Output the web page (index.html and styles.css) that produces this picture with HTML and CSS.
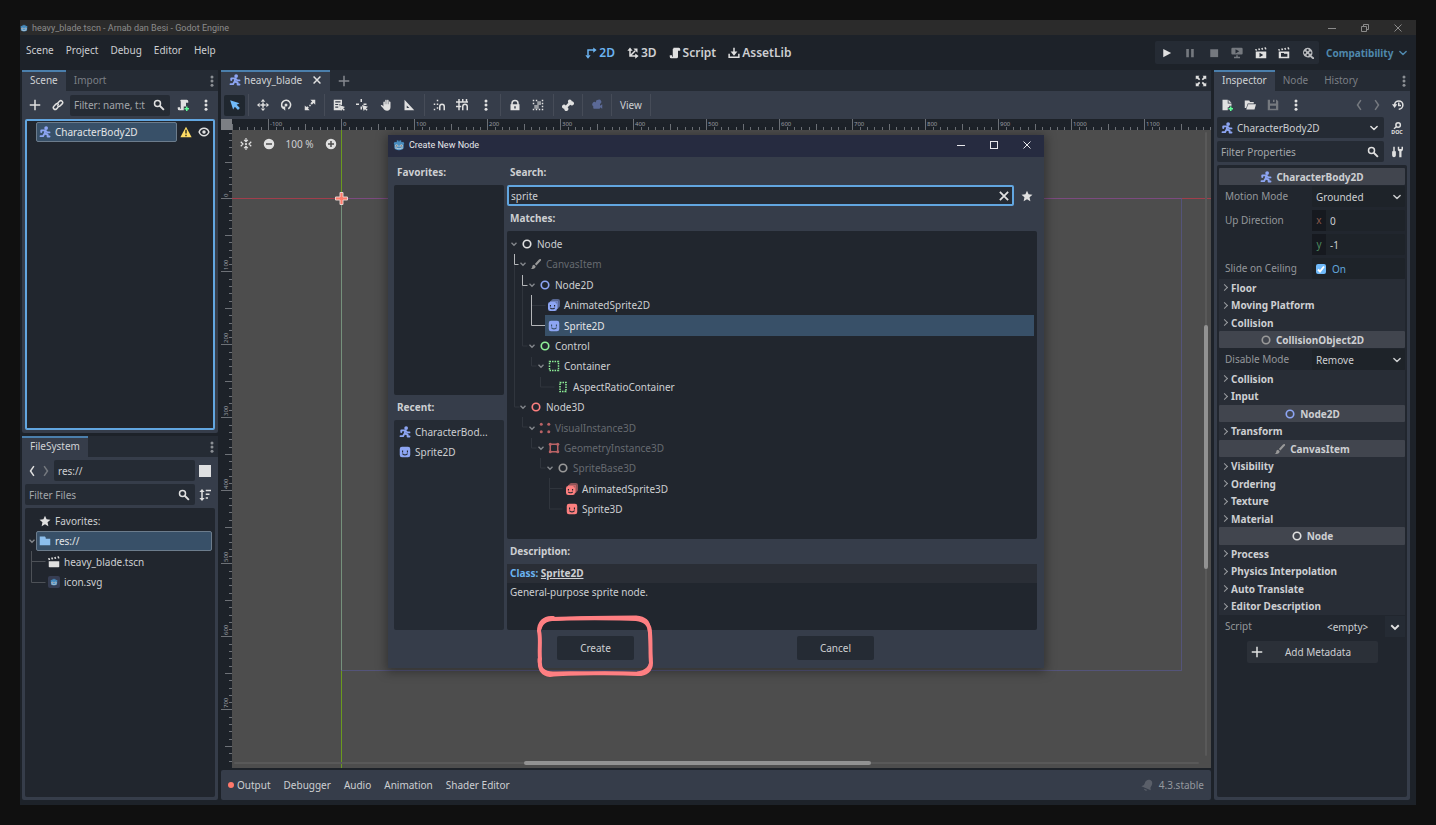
FILE: index.html
```
<!DOCTYPE html>
<html lang="en">
<head>
  <meta charset="UTF-8" />
  <title>heavy_blade.tscn - Arnab dan Besi - Godot Engine</title>
  <link rel="stylesheet" href="styles.css">
</head>
<body>
  <!-- icon sprites, 16x16 grid -->
  <svg class="sprites" aria-hidden="true">
    <symbol id="i-godot" viewBox="0 0 16 16">
      <path fill="#478cbf" d="M1 5.500 2.500 3.500l1.500.8L5 4V2l2-.5.8 2h.4l.8-2 2 .5v2l1 .3 1.500-.8L15 5.500l-.7 1.500V11c0 2.500-3 4-6.300 4s-6.300-1.500-6.300-4V7z"/>
      <circle cx="4.800" cy="9" r="1.700" fill="#e0e0e0"/><circle cx="11.200" cy="9" r="1.700" fill="#e0e0e0"/>
      <circle cx="5" cy="9.200" r=".9" fill="#414042"/><circle cx="11" cy="9.200" r=".9" fill="#414042"/>
      <path fill="none" stroke="#e0e0e0" d="M8 8.500v2M2.500 12h3v1h5v-1h3"/>
    </symbol>
    <symbol id="i-body" viewBox="0 0 16 16">
      <circle cx="9.500" cy="2.800" r="2.500" fill="currentColor"/>
      <path fill="none" stroke="currentColor" stroke-width="2.500" stroke-linejoin="round" stroke-linecap="round" d="M3 8V5.800h5.500L7.500 10l4 1.500V14H14M9 6.500l2 2h3M7 10.500l-1.500 3H2"/>
    </symbol>
    <symbol id="i-node" viewBox="0 0 16 16"><circle cx="8" cy="8" r="5" fill="none" stroke="currentColor" stroke-width="2.200"/></symbol>
    <symbol id="i-brush" viewBox="0 0 16 16">
      <path fill="currentColor" d="M14.500 1.500c-1-.8-2 .2-2.500.6L6.500 8l2 2L14 4c.6-.7 1.200-1.700.5-2.500zM5.500 9C3.500 9 3 10.500 3 12c0 1-1 2-2 2 2 1.200 6.500.8 6.500-3z"/>
    </symbol>
    <symbol id="i-sprite" viewBox="0 0 16 16">
      <path fill="currentColor" fill-rule="evenodd" d="M4 1h8a3 3 0 0 1 3 3v8a3 3 0 0 1-3 3H4a3 3 0 0 1-3-3V4a3 3 0 0 1 3-3zM4 6v2.500h1.500V6zm6.500 0v2.500H12V6zM4 10c.5 3.500 7.500 3.500 8 0h-1.500c-.8 1.500-4.200 1.500-5 0z"/>
    </symbol>
    <symbol id="i-anim" viewBox="0 0 16 16">
      <path fill="currentColor" opacity=".5" d="M7 0h6a3 3 0 0 1 3 3v6a3 3 0 0 1-2 2.800V5a3 3 0 0 0-3-3H4.200A3 3 0 0 1 7 0z"/>
      <path fill="currentColor" opacity=".75" d="M5 2h6a3 3 0 0 1 3 3v6a3 3 0 0 1-2 2.800V7a3 3 0 0 0-3-3H2.200A3 3 0 0 1 5 2z"/>
      <path fill="currentColor" fill-rule="evenodd" d="M3 4h6a3 3 0 0 1 3 3v6a3 3 0 0 1-3 3H3a3 3 0 0 1-3-3V7a3 3 0 0 1 3-3zM2.500 8v2H4V8zM8 8v2h1.500V8zm-5.500 3.500c.5 3 6.500 3 7 0H8c-.7 1-3.300 1-4 0z"/>
    </symbol>
    <symbol id="i-container" viewBox="0 0 16 16"><rect x="2" y="2" width="12" height="12" fill="none" stroke="currentColor" stroke-width="2" stroke-dasharray="2 1.400"/></symbol>
    <symbol id="i-aspect" viewBox="0 0 16 16"><rect x="4" y="2" width="8" height="12" fill="none" stroke="currentColor" stroke-width="2" stroke-dasharray="2 1.330"/></symbol>
    <symbol id="i-visual" viewBox="0 0 16 16">
      <g fill="currentColor"><circle cx="3" cy="3" r="2"/><circle cx="13" cy="3" r="2"/><circle cx="3" cy="13" r="2"/><circle cx="13" cy="13" r="2"/></g>
    </symbol>
    <symbol id="i-geometry" viewBox="0 0 16 16">
      <g fill="currentColor"><circle cx="3" cy="3" r="2"/><circle cx="13" cy="3" r="2"/><circle cx="3" cy="13" r="2"/><circle cx="13" cy="13" r="2"/></g>
      <rect x="3" y="3" width="10" height="10" fill="none" stroke="currentColor" stroke-width="2"/>
    </symbol>
    <symbol id="i-add" viewBox="0 0 16 16"><path fill="currentColor" d="M7 1v6H1v2h6v6h2V9h6V7H9V1z"/></symbol>
    <symbol id="i-link" viewBox="0 0 16 16">
      <g fill="none" stroke="currentColor" stroke-width="2" stroke-linecap="round"><path d="M8 5l2-2a2.500 2.500 0 0 1 3.500 0 2.500 2.500 0 0 1 0 3.500L11 9a2.500 2.500 0 0 1-3.500 0"/><path d="M8 11l-2 2.200a2.500 2.500 0 0 1-3.500 0 2.500 2.500 0 0 1 0-3.500L5 7a2.500 2.500 0 0 1 3.500 0"/></g>
    </symbol>
    <symbol id="i-search" viewBox="0 0 16 16"><g fill="none" stroke="currentColor" stroke-width="2"><circle cx="6" cy="6" r="4"/><path d="M9 9l5.500 5.500" stroke-width="2.500"/></g></symbol>
    <symbol id="i-script" viewBox="0 0 16 16"><path fill="currentColor" d="M6 1v1a1 1 0 0 0-1 1v10H4v-2H1v2a2 2 0 0 0 2 2h7a2 2 0 0 0 2-2V5h3V3a2 2 0 0 0-2-2z"/></symbol>
    <symbol id="i-script-add" viewBox="0 0 16 16">
      <path fill="currentColor" d="M6 1a1 1 0 0 0-1 2v10H4v-2H1v2a2 2 0 0 0 2 2h6v-5h3V5h3V3a2 2 0 0 0-2-2z"/>
      <path fill="#5fff97" d="M12 10h2v2h2v2h-2v2h-2v-2h-2v-2h2z"/>
    </symbol>
    <symbol id="i-dots" viewBox="0 0 16 16"><g fill="currentColor"><circle cx="8" cy="2.500" r="2"/><circle cx="8" cy="8" r="2"/><circle cx="8" cy="13.500" r="2"/></g></symbol>
    <symbol id="i-warn" viewBox="0 0 16 16"><path fill="#ffdd65" d="M8 1 .5 15h15z"/><path fill="#3a3520" d="M7 5h2v5H7zM7 11.500h2v2H7z"/></symbol>
    <symbol id="i-eye" viewBox="0 0 16 16"><path fill="none" stroke="currentColor" stroke-width="2" d="M1.500 8c2.500-6.500 10.500-6.500 13 0-2.500 6.500-10.500 6.500-13 0z"/><circle cx="8" cy="8" r="2.300" fill="currentColor"/></symbol>
    <symbol id="i-left" viewBox="0 0 16 16"><path fill="none" stroke="currentColor" stroke-width="2" d="M10.500 1.500 6 8l4.500 6.500"/></symbol>
    <symbol id="i-right" viewBox="0 0 16 16"><path fill="none" stroke="currentColor" stroke-width="2" d="M5.500 1.500 10 8l-4.500 6.500"/></symbol>
    <symbol id="i-down" viewBox="0 0 16 16"><path fill="none" stroke="currentColor" stroke-width="2.400" stroke-linecap="round" stroke-linejoin="round" d="M3 5.500l5 5 5-5"/></symbol>
    <symbol id="i-fold" viewBox="0 0 8 8"><path fill="none" stroke="currentColor" stroke-width="1.300" d="M1.500 2.800 4 5.300l2.500-2.500"/></symbol>
    <symbol id="i-close" viewBox="0 0 16 16"><path fill="none" stroke="currentColor" stroke-width="2.400" d="M2.500 2.500l11 11M13.500 2.500l-11 11"/></symbol>
    <symbol id="i-sort" viewBox="0 0 16 16"><path fill="currentColor" d="M4 0 .5 4H3v8H.5L4 16l3.500-4H5V4h2.500zM9 1h7v2H9zM9 6h5v2H9zM9 11h3v2H9z"/></symbol>
    <symbol id="i-star" viewBox="0 0 16 16"><path fill="currentColor" d="M8 1l2.100 4.800 5.200.5-3.900 3.500 1.100 5.200L8 12.300 3.500 15l1.100-5.200L.7 6.300l5.200-.5z"/></symbol>
    <symbol id="i-folder" viewBox="0 0 16 16"><path fill="currentColor" d="M1 2v11.500h14V5H9V3.500L8 2z"/></symbol>
    <symbol id="i-clapper" viewBox="0 0 16 16"><path fill="currentColor" d="M1 7h14v7a1 1 0 0 1-1 1H2a1 1 0 0 1-1-1zM0 3l2-.5 1 2.500L1 5.500zM4 2.200l2-.4 1 2.500-2 .4zM8.200 1.500l2-.4L11 3.600l-2 .3zM12.400.8l2-.4 1 2.600-2 .4z"/></symbol>
    <symbol id="i-clapper-play" viewBox="0 0 16 16"><path fill="currentColor" fill-rule="evenodd" d="M1 6h14v9H1zM6 7.500v6l5-3zM0 3l2-.5L3 4.500 1 5zM4 2.200l2-.4L7 4l-2 .3zM8.200 1.500l2-.4L11 3.500l-2 .3zM12.400.8l2-.4 1 2.600-2 .2z"/></symbol>
    <symbol id="i-clapper-open" viewBox="0 0 16 16"><path fill="currentColor" fill-rule="evenodd" d="M1 6h14v9H1zM4 8v5h8.500V9H8V8zM0 3l2-.5L3 4.500 1 5zM4 2.200l2-.4L7 4l-2 .3zM8.200 1.500l2-.4L11 3.500l-2 .3zM12.400.8l2-.4 1 2.600-2 .2z"/></symbol>
    <symbol id="i-play" viewBox="0 0 16 16"><path fill="currentColor" d="M3 2.500v11l10.500-5.500z"/></symbol>
    <symbol id="i-pause" viewBox="0 0 16 16"><path fill="currentColor" d="M3 2.500h3.500v11H3zM9.500 2.500H13v11H9.500z"/></symbol>
    <symbol id="i-stop" viewBox="0 0 16 16"><path fill="currentColor" d="M3 3h10.500v10.500H3z"/></symbol>
    <symbol id="i-remote" viewBox="0 0 16 16"><path fill="currentColor" fill-rule="evenodd" d="M2 1h12a1.500 1.500 0 0 1 1.500 1.500v6A1.500 1.500 0 0 1 14 10H2A1.500 1.500 0 0 1 .5 8.500v-6A1.500 1.500 0 0 1 2 1zm4 2v5.500l5-2.700zM7 11h2v2h3v2H4v-2h3z"/></symbol>
    <symbol id="i-reel" viewBox="0 0 16 16"><path fill="currentColor" fill-rule="evenodd" d="M7.500 1a6.500 6.500 0 0 1 6.500 6.500c0 1.500-.5 3-1.300 4L16 14v2h-2l-3-2.800A6.500 6.500 0 1 1 7.500 1zm0 1.700a1.500 1.500 0 1 0 0 3 1.500 1.500 0 0 0 0-3zM4 6a1.500 1.500 0 1 0 0 3 1.500 1.500 0 0 0 0-3zm7 0a1.500 1.500 0 1 0 0 3 1.500 1.500 0 0 0 0-3zm-3.500 3.300a1.500 1.500 0 1 0 0 3 1.500 1.500 0 0 0 0-3z"/></symbol>
    <symbol id="i-2d" viewBox="0 0 16 16"><path fill="none" stroke="currentColor" stroke-width="2" d="M4 11V4h8"/><path fill="currentColor" d="M11 .5 15.500 4 11 7.500zM.5 11 4 15.500 7.500 11z"/></symbol>
    <symbol id="i-3d" viewBox="0 0 16 16"><path fill="none" stroke="currentColor" stroke-width="2" d="M4 4v8h8M4 12l7-7"/><path fill="currentColor" d="M.5 5 4 .5 7.500 5zM11 8.500 15.500 12 11 15.500zM8.500 2H14v5.500z"/></symbol>
    <symbol id="i-asset" viewBox="0 0 16 16"><path fill="none" stroke="currentColor" stroke-width="2" d="M8 1v7M1.500 9v4.500h13V9"/><path fill="currentColor" d="M3.500 6 8 11.500 12.500 6z"/></symbol>
    <symbol id="i-select" viewBox="0 0 16 16"><path fill="currentColor" d="M1.500 1.500 5.500 14l2.300-3.800 4.200 4.300 2.500-2.500-4.300-4.200L14 5.500z"/></symbol>
    <symbol id="i-move" viewBox="0 0 16 16"><path fill="currentColor" fill-rule="evenodd" d="M8 0 5 3.500h6zM8 16l3-3.500H5zM0 8l3.500 3V5zM16 8l-3.500-3v6zM7 4.500h2V7h2.500v2H9v2.500H7V9H4.500V7H7z"/></symbol>
    <symbol id="i-rotate" viewBox="0 0 16 16"><path fill="none" stroke="currentColor" stroke-width="2" d="M4.500 12.500A6 6 0 1 1 11 13"/><path fill="currentColor" d="M1 10h6v5.500zM8 6a2 2 0 1 0 0 4 2 2 0 0 0 0-4z"/></symbol>
    <symbol id="i-scale" viewBox="0 0 16 16"><path fill="currentColor" d="M8.500 1H15v6.500l-2.200-2.200L10.500 7.500l-2-2 2.300-2.300zM1 8.500l2.200 2.200 1.300-1.200 2 2-1.200 1.300L7.500 15H1zM7 7.500h2v2H7z"/></symbol>
    <symbol id="i-list" viewBox="0 0 16 16"><path fill="currentColor" fill-rule="evenodd" d="M1 1h11v7L8 7l3 8H1zM3 3v1.500h7V3zm0 3.500V8h4V6.500zM3 10v1.500h4V10z"/><path fill="currentColor" d="M8.500 8l2.300 8 1.500-2.500 2.200 2.200 1.300-1.300-2.200-2.100L16 10.500z"/></symbol>
    <symbol id="i-pivot" viewBox="0 0 16 16"><path fill="currentColor" d="M6 0h2v4H6zM0 6h4v2H0zM10 6h4v2h-4zM6 10h2v4H6zM8 8l2.300 8 1.700-2.500 2.200 2.200 1.300-1.300-2.200-2.200L16 10.300z"/></symbol>
    <symbol id="i-pan" viewBox="0 0 16 16"><path fill="currentColor" d="M7 1.500c1.300-1 2 0 2 1V7h.5V1.500c1-1 2 0 2 .8V7h.5V3.500c1-.8 2 0 2 .8V11c0 3-2 4.500-4.500 4.500-3 0-4-1-5.500-3.500L1 9c.5-1.500 2-1.200 3.500 1V4c.5-1.200 2-1 2 0v3H7z"/></symbol>
    <symbol id="i-ruler" viewBox="0 0 16 16"><path fill="currentColor" fill-rule="evenodd" d="M2 1l13 14H2zm3 7.500V12h3.500z"/></symbol>
    <symbol id="i-snap" viewBox="0 0 16 16"><path fill="currentColor" d="M5 1h2v2H5zM1 6h2v2H1zM5 6h2v2H5zM1 13h2v2H1zM5 11h2v2H5z"/><path fill="none" stroke="currentColor" stroke-width="2" d="M9 15v-5a3 3 0 0 1 6 0v5"/></symbol>
    <symbol id="i-grid" viewBox="0 0 16 16"><path fill="currentColor" d="M3 0h2v3h3V0h2v3h3V0h2v3h1v2H5v4h2v2H5v4H3v-4H0V9h3V5H0V3h3z"/><path fill="none" stroke="currentColor" stroke-width="2" d="M9 15v-5a3 3 0 0 1 6 0v5"/></symbol>
    <symbol id="i-lock" viewBox="0 0 16 16"><path fill="currentColor" fill-rule="evenodd" d="M8 1a5 5 0 0 1 5 5v1h1v8H2V7h1V6a5 5 0 0 1 5-5zm0 2a3 3 0 0 0-3 3v1h6V6a3 3 0 0 0-3-3zM7 9.500v3h2v-3z"/></symbol>
    <symbol id="i-group" viewBox="0 0 16 16"><path fill="currentColor" d="M1 1h2v2H1zM5 1h2v2H5zM13 1h2v2h-2zM1 5h2v2H1zM13 5h2v2h-2zM1 13h2v2H1zM5 13h2v2H5zM9 13h2v2H9zM13 13h2v2h-2zM13 9h2v2h-2z"/><path fill="currentColor" opacity=".6" d="M7 3h5v5H7zM3 8h6v5H3z"/></symbol>
    <symbol id="i-bone" viewBox="0 0 16 16"><path fill="currentColor" d="M10.500.5a2.800 2.800 0 0 0-2 4.500L5 8.500A2.800 2.800 0 1 0 3 13a2.800 2.800 0 1 0 4.500-2L11 7.500A2.800 2.800 0 1 0 13 3a2.800 2.800 0 0 0-2.500-2.500z"/></symbol>
    <symbol id="i-camera" viewBox="0 0 16 16"><path fill="currentColor" d="M9.500 1a3 3 0 0 0-2.900 3.500A3 3 0 1 0 3 9.500V12a1 1 0 0 0 1 1h7a1 1 0 0 0 1-1v-1l3 2V7l-3 2V6.500A3 3 0 0 0 9.500 1z"/></symbol>
    <symbol id="i-expand" viewBox="0 0 16 16"><path fill="currentColor" d="M1 1h5L4.500 2.500l2.500 3L5.500 7l-3-2.500L1 6zM15 1h-5l1.500 1.500-2.500 3L10.500 7l3-2.500L15 6zM1 15h5l-1.500-1.500 2.500-3L5.500 9l-3 2.500L1 10zM15 15h-5l1.500-1.500-2.500-3L10.500 9l3 2.500L15 10z"/></symbol>
    <symbol id="i-new" viewBox="0 0 16 16"><path fill="currentColor" d="M2 1v14h7v-4h2V9h3V6H9V1zM10 1v4h4z"/><path fill="#5fff97" d="M12 10h2v2h2v2h-2v2h-2v-2h-2v-2h2z"/></symbol>
    <symbol id="i-load" viewBox="0 0 16 16"><path fill="currentColor" d="M1 2h6l1 2h5v2H5l-2 6H1zM5.500 7H16l-2 7H3z"/></symbol>
    <symbol id="i-save" viewBox="0 0 16 16"><path fill="currentColor" fill-rule="evenodd" d="M1 1h3v5h8V1h1l2 2v12H1zm7 0h2v3H8zM4 9v4h8V9z"/></symbol>
    <symbol id="i-history" viewBox="0 0 16 16"><path fill="none" stroke="currentColor" stroke-width="2" d="M3.500 8a5.500 5.500 0 1 1 5.500 5.500M9 4.500V8.500H12"/><path fill="currentColor" d="M0 7h7l-3.500 5z"/></symbol>
    <symbol id="i-doc" viewBox="0 0 16 16"><g fill="none" stroke="currentColor" stroke-width="2"><circle cx="9.500" cy="4" r="3"/><path d="M7.500 6 4 9"/></g><text x="8" y="16" text-anchor="middle" fill="currentColor" font-family="Noto Sans" font-weight="700" font-size="7">DOC</text></symbol>
    <symbol id="i-tools" viewBox="0 0 16 16"><path fill="currentColor" d="M3 1h2v6h1.500v5c0 4-5 4-5 0V7H3zM9 1v3c0 1.500.8 2.500 2 3v8h3V7c1.200-.5 2-1.500 2-3V1h-2v3h-3V1z"/></symbol>
    <symbol id="i-bell" viewBox="0 0 16 16"><path fill="currentColor" d="M13 1.500c-4-1.500-7 .5-8 4L4 8 .5 9.500 13 15l-.5-3.500L14 9c1.500-3 1.500-6-1-7.500zM4 13a2.500 2.500 0 0 0 4.500 1.500z"/></symbol>
    <symbol id="i-center" viewBox="0 0 16 16"><circle cx="8" cy="8" r="1.500" fill="currentColor"/><path fill="none" stroke="currentColor" stroke-width="1.600" d="M8 0v5M8 16v-5M5.500 2.500 8 5l2.500-2.500M5.500 13.500 8 11l2.500 2.500M1 5l3 3-3 3M15 5l-3 3 3 3"/></symbol>
    <symbol id="i-minus" viewBox="0 0 16 16"><path fill="currentColor" fill-rule="evenodd" d="M8 1a7 7 0 1 1 0 14A7 7 0 0 1 8 1zM4 7v2h8V7z"/></symbol>
    <symbol id="i-plus" viewBox="0 0 16 16"><path fill="currentColor" fill-rule="evenodd" d="M8 1a7 7 0 1 1 0 14A7 7 0 0 1 8 1zM7 4v3H4v2h3v3h2V9h3V7H9V4z"/></symbol>
    <symbol id="w-min" viewBox="0 0 8 8"><path fill="none" stroke="currentColor" d="M0 4.500h8"/></symbol>
    <symbol id="w-max" viewBox="0 0 8 8"><rect x=".5" y=".5" width="7" height="7" fill="none" stroke="currentColor"/></symbol>
    <symbol id="w-restore" viewBox="0 0 8 8"><path fill="none" stroke="currentColor" d="M.5 2.500h5v5h-5zM2.500 2V.5h5v5H6"/></symbol>
    <symbol id="w-close" viewBox="0 0 8 8"><path fill="none" stroke="currentColor" d="M.5.500l7 7M7.500.500l-7 7"/></symbol>
  </svg>

  <div class="app">
    <header class="titlebar">
      <svg class="icon logo"><use href="#i-godot"/></svg>
      <span>heavy_blade.tscn - Arnab dan Besi - Godot Engine</span>
      <div class="window-buttons">
        <button aria-label="Minimize"><svg><use href="#w-min"/></svg></button>
        <button aria-label="Restore"><svg><use href="#w-restore"/></svg></button>
        <button aria-label="Close"><svg><use href="#w-close"/></svg></button>
      </div>
    </header>

    <div class="menubar">
      <nav class="menus">
        <button>Scene</button>
        <button>Project</button>
        <button>Debug</button>
        <button>Editor</button>
        <button>Help</button>
      </nav>
      <div class="workspaces">
        <button class="active"><svg class="icon"><use href="#i-2d"/></svg>2D</button>
        <button><svg class="icon"><use href="#i-3d"/></svg>3D</button>
        <button><svg class="icon"><use href="#i-script"/></svg>Script</button>
        <button><svg class="icon"><use href="#i-asset"/></svg>AssetLib</button>
      </div>
      <div class="run">
        <div class="run-buttons">
          <button aria-label="Run project"><svg class="icon"><use href="#i-play"/></svg></button>
          <button aria-label="Pause" class="dim"><svg class="icon"><use href="#i-pause"/></svg></button>
          <button aria-label="Stop" class="dim"><svg class="icon"><use href="#i-stop"/></svg></button>
          <button aria-label="Remote debug" class="dim"><svg class="icon"><use href="#i-remote"/></svg></button>
          <button aria-label="Run current scene"><svg class="icon"><use href="#i-clapper-play"/></svg></button>
          <button aria-label="Run specific scene"><svg class="icon"><use href="#i-clapper-open"/></svg></button>
          <button aria-label="Movie maker" class="reel"><svg class="icon"><use href="#i-reel"/></svg></button>
        </div>
        <div class="renderer">
          <select aria-label="Renderer"><option>Compatibility</option></select>
          <svg class="icon small"><use href="#i-down"/></svg>
        </div>
      </div>
    </div>

    <main class="workarea">
      <!-- left docks -->
      <div class="dock-column">
        <section class="dock scene-dock">
          <div class="tabs">
            <button class="tab active">Scene</button>
            <button class="tab">Import</button>
            <button class="tab-menu" aria-label="Dock options"><svg class="icon"><use href="#i-dots"/></svg></button>
          </div>
          <div class="toolbar">
            <button aria-label="Add node"><svg class="icon"><use href="#i-add"/></svg></button>
            <button aria-label="Instance scene"><svg class="icon"><use href="#i-link"/></svg></button>
            <label class="field">
              <input type="text" placeholder="Filter: name, t:t" aria-label="Filter nodes">
              <svg class="icon"><use href="#i-search"/></svg>
            </label>
            <button aria-label="Attach script"><svg class="icon"><use href="#i-script-add"/></svg></button>
            <button aria-label="More"><svg class="icon"><use href="#i-dots"/></svg></button>
          </div>
          <div class="tree focused">
            <div class="row">
              <span class="fold"></span>
              <span class="item selected outlined"><svg class="icon blue"><use href="#i-body"/></svg>CharacterBody2D</span>
              <button aria-label="Warnings" class="row-button"><svg class="icon"><use href="#i-warn"/></svg></button>
              <button aria-label="Toggle visibility" class="row-button"><svg class="icon"><use href="#i-eye"/></svg></button>
            </div>
          </div>
        </section>

        <section class="dock files-dock">
          <div class="tabs">
            <button class="tab active">FileSystem</button>
            <button class="tab-menu" aria-label="Dock options"><svg class="icon"><use href="#i-dots"/></svg></button>
          </div>
          <div class="file-bars">
            <div class="file-bar">
              <button aria-label="Back" class="nav"><svg class="icon"><use href="#i-left"/></svg></button>
              <button aria-label="Forward" class="nav dim"><svg class="icon"><use href="#i-right"/></svg></button>
              <label class="field path"><input type="text" value="res://" aria-label="Path"></label>
              <button aria-label="Split mode" class="side"><span class="split"></span></button>
            </div>
            <div class="file-bar">
              <label class="field">
                <input type="text" placeholder="Filter Files" aria-label="Filter Files">
                <svg class="icon"><use href="#i-search"/></svg>
              </label>
              <button aria-label="Sort" class="side"><svg class="icon"><use href="#i-sort"/></svg></button>
            </div>
          </div>
          <div class="tree">
            <svg class="guides" aria-hidden="true"><path class="mid" d="M6.500 43v31.500h14M6.500 53.500h14"/></svg>
            <div class="row">
              <span class="fold"></span>
              <span class="item"><svg class="icon"><use href="#i-star"/></svg>Favorites:</span>
            </div>
            <div class="row">
              <svg class="fold"><use href="#i-fold"/></svg>
              <span class="item selected outlined"><svg class="icon folder"><use href="#i-folder"/></svg>res://</span>
            </div>
            <div class="row lv1">
              <span class="fold"></span>
              <span class="item"><svg class="icon"><use href="#i-clapper"/></svg>heavy_blade.tscn</span>
            </div>
            <div class="row lv1">
              <span class="fold"></span>
              <span class="item"><svg class="icon thumb"><use href="#i-godot"/></svg>icon.svg</span>
            </div>
          </div>
        </section>
      </div>

      <!-- 2D editor -->
      <div class="center">
        <div class="tabs">
          <button class="tab active scene-tab"><svg class="icon blue"><use href="#i-body"/></svg>heavy_blade<svg class="icon x"><use href="#i-close"/></svg></button>
          <button class="new-tab" aria-label="New scene"><svg class="icon"><use href="#i-add"/></svg></button>
          <button class="tab-menu wide" aria-label="Distraction free"><svg class="icon"><use href="#i-expand"/></svg></button>
        </div>
        <div class="canvas-tools">
          <button class="pressed" aria-label="Select"><svg class="icon"><use href="#i-select"/></svg></button>
          <div class="tool-group">
            <button aria-label="Move"><svg class="icon"><use href="#i-move"/></svg></button>
            <button aria-label="Rotate"><svg class="icon"><use href="#i-rotate"/></svg></button>
            <button aria-label="Scale"><svg class="icon"><use href="#i-scale"/></svg></button>
          </div>
          <div class="tool-group">
            <button aria-label="List select"><svg class="icon"><use href="#i-list"/></svg></button>
            <button aria-label="Pivot"><svg class="icon"><use href="#i-pivot"/></svg></button>
            <button aria-label="Pan"><svg class="icon"><use href="#i-pan"/></svg></button>
            <button aria-label="Ruler"><svg class="icon"><use href="#i-ruler"/></svg></button>
          </div>
          <div class="tool-group">
            <button aria-label="Smart snap"><svg class="icon"><use href="#i-snap"/></svg></button>
            <button aria-label="Grid snap"><svg class="icon"><use href="#i-grid"/></svg></button>
            <button aria-label="Snap options"><svg class="icon"><use href="#i-dots"/></svg></button>
          </div>
          <div class="tool-group">
            <button aria-label="Lock"><svg class="icon"><use href="#i-lock"/></svg></button>
            <button aria-label="Group"><svg class="icon"><use href="#i-group"/></svg></button>
          </div>
          <div class="tool-group">
            <button aria-label="Skeleton"><svg class="icon"><use href="#i-bone"/></svg></button>
          </div>
          <div class="tool-group">
            <button aria-label="Override camera" class="camera"><svg class="icon"><use href="#i-camera"/></svg></button>
          </div>
          <div class="tool-group view"><button>View</button></div>
        </div>

        <div class="viewport">
          <span class="ruler-corner"></span>
          <svg class="ruler-h">
            <defs>
              <pattern id="ticks-h" x="36" width="73" height="11" patternUnits="userSpaceOnUse">
                <path stroke="#6d7177" d="M.5 0v11M37.500 5v6M8.500 8v3M15.500 8v3M22.500 8v3M30.500 8v3M44.500 8v3M52.500 8v3M59.500 8v3M66.500 8v3"/>
              </pattern>
            </defs>
            <rect width="100%" height="11" fill="url(#ticks-h)"/>
            <g id="labels-h"></g>
          </svg>
          <svg class="ruler-v">
            <defs>
              <pattern id="ticks-v" y="68" width="11" height="73" patternUnits="userSpaceOnUse">
                <path stroke="#6d7177" d="M0 .5h11M4 37.500h7M8 8.500h3M8 15.500h3M8 22.500h3M8 30.500h3M8 44.500h3M8 52.500h3M8 59.500h3M8 66.500h3"/>
              </pattern>
            </defs>
            <rect width="11" height="100%" fill="url(#ticks-v)"/>
            <g id="labels-v"></g>
          </svg>
          <div class="canvas">
            <div class="axis axis-x"></div>
            <div class="axis axis-y"></div>
            <div class="screen-rect"></div>
            <svg class="origin" viewBox="0 0 13 13"><path fill="#ff7b6b" stroke="#e9cfcb" d="M5 .5h3V5h4.500v3H8v4.500H5V8H.5V5H5z"/></svg>
            <div class="zoom">
              <button aria-label="Center view"><svg class="icon"><use href="#i-center"/></svg></button>
              <button aria-label="Zoom out"><svg class="icon"><use href="#i-minus"/></svg></button>
              <button class="percent">100 %</button>
              <button aria-label="Zoom in"><svg class="icon"><use href="#i-plus"/></svg></button>
            </div>
            <div class="scroll scroll-v"><span></span></div>
            <div class="scroll scroll-h"><span></span></div>
          </div>
        </div>

        <footer class="bottom-panel">
          <button class="output">Output</button>
          <button>Debugger</button>
          <button>Audio</button>
          <button>Animation</button>
          <button>Shader Editor</button>
          <div class="version"><svg class="icon"><use href="#i-bell"/></svg><a href="#">4.3.stable</a></div>
        </footer>
      </div>

      <!-- inspector -->
      <section class="dock inspector">
        <div class="tabs">
          <button class="tab active">Inspector</button>
          <button class="tab">Node</button>
          <button class="tab">History</button>
          <button class="tab-menu" aria-label="Dock options"><svg class="icon"><use href="#i-dots"/></svg></button>
        </div>
        <div class="toolbar">
          <button aria-label="New resource"><svg class="icon"><use href="#i-new"/></svg></button>
          <button aria-label="Load resource"><svg class="icon"><use href="#i-load"/></svg></button>
          <button aria-label="Save resource" class="dim"><svg class="icon"><use href="#i-save"/></svg></button>
          <button aria-label="Extra options"><svg class="icon"><use href="#i-dots"/></svg></button>
          <span class="spacer"></span>
          <button aria-label="Previous" class="nav dim"><svg class="icon"><use href="#i-left"/></svg></button>
          <button aria-label="Next" class="nav dim"><svg class="icon"><use href="#i-right"/></svg></button>
          <button aria-label="History"><svg class="icon"><use href="#i-history"/></svg></button>
        </div>
        <div class="inspector-bars">
          <div class="file-bar">
            <label class="field object">
              <svg class="icon blue"><use href="#i-body"/></svg>
              <select aria-label="Edited object"><option>CharacterBody2D</option></select>
              <svg class="icon small"><use href="#i-down"/></svg>
            </label>
            <button aria-label="Open documentation" class="side"><svg class="icon"><use href="#i-doc"/></svg></button>
          </div>
          <div class="file-bar">
            <label class="field">
              <input type="text" placeholder="Filter Properties" aria-label="Filter Properties">
              <svg class="icon"><use href="#i-search"/></svg>
            </label>
            <button aria-label="Manage properties" class="side"><svg class="icon"><use href="#i-tools"/></svg></button>
          </div>
        </div>

        <div class="properties">
          <h3 class="class-header"><svg class="icon blue"><use href="#i-body"/></svg>CharacterBody2D</h3>
          <div class="props">
            <div class="prop">
              <label for="motion">Motion Mode</label>
              <div class="value"><select id="motion"><option>Grounded</option></select><svg class="icon small"><use href="#i-down"/></svg></div>
            </div>
            <div class="prop">
              <label for="upx">Up Direction</label>
              <div class="value"><span class="component cx">x</span><input id="upx" type="text" value="0"></div>
              <div class="value second"><span class="component cy">y</span><input type="text" value="-1" aria-label="Up Direction y"></div>
            </div>
            <div class="prop">
              <label for="slide">Slide on Ceiling</label>
              <div class="value on">
                <input type="checkbox" id="slide" checked>
                <svg class="tick" viewBox="0 0 10 10" aria-hidden="true"><path d="M2 5.500l2 2 4-5"/></svg>
                <label for="slide">On</label>
              </div>
            </div>
          </div>
          <div class="groups">
            <button>Floor</button>
            <button>Moving Platform</button>
            <button>Collision</button>
          </div>
          <h3 class="class-header"><svg class="icon grey"><use href="#i-node"/></svg>CollisionObject2D</h3>
          <div class="props">
            <div class="prop">
              <label for="disable">Disable Mode</label>
              <div class="value"><select id="disable"><option>Remove</option></select><svg class="icon small"><use href="#i-down"/></svg></div>
            </div>
          </div>
          <div class="groups">
            <button>Collision</button>
            <button>Input</button>
            <h3 class="class-header"><svg class="icon blue"><use href="#i-node"/></svg>Node2D</h3>
            <button>Transform</button>
            <h3 class="class-header"><svg class="icon grey"><use href="#i-brush"/></svg>CanvasItem</h3>
            <button>Visibility</button>
            <button>Ordering</button>
            <button>Texture</button>
            <button>Material</button>
            <h3 class="class-header"><svg class="icon"><use href="#i-node"/></svg>Node</h3>
            <button>Process</button>
            <button>Physics Interpolation</button>
            <button>Auto Translate</button>
            <button>Editor Description</button>
          </div>
          <div class="props">
            <div class="prop">
              <label for="script">Script</label>
              <div class="value script"><select id="script"><option>&lt;empty&gt;</option></select><span class="drop"><svg class="icon"><use href="#i-fold"/></svg></span></div>
            </div>
          </div>
          <button class="metadata"><svg class="icon"><use href="#i-add"/></svg><span>Add Metadata</span></button>
        </div>
      </section>
    </main>

    <div class="dialog" role="dialog" aria-labelledby="dialogTitle">
      <div class="dialog-title">
        <svg class="icon"><use href="#i-godot"/></svg>
        <span id="dialogTitle">Create New Node</span>
        <div class="window-buttons">
          <button aria-label="Minimize"><svg><use href="#w-min"/></svg></button>
          <button aria-label="Maximize"><svg><use href="#w-max"/></svg></button>
          <button aria-label="Close"><svg><use href="#w-close"/></svg></button>
        </div>
      </div>
      <div class="dialog-body">
        <div class="dialog-side">
          <h4>Favorites:</h4>
          <div class="favorites"></div>
          <h4>Recent:</h4>
          <div class="recent">
            <div class="row"><svg class="icon blue"><use href="#i-body"/></svg>CharacterBod...</div>
            <div class="row"><svg class="icon blue"><use href="#i-sprite"/></svg>Sprite2D</div>
          </div>
        </div>
        <div class="dialog-main">
          <h4><label for="search">Search:</label></h4>
          <div class="search-row">
            <label class="field focused">
              <input type="text" id="search" value="sprite">
              <svg class="icon"><use href="#i-close"/></svg>
            </label>
            <button aria-label="Favorite"><svg class="icon"><use href="#i-star"/></svg></button>
          </div>
          <h4>Matches:</h4>
          <div class="tree matches">
            <svg class="guides" aria-hidden="true">
              <path d="M7.500 33v143h5M15.500 54v61h5M24.500 74.500h14M24.500 126v9h5M33.500 146v10h14M15.500 186v10h5M24.500 207v10h5M33.500 227v10h5M42.500 247v31h13M42.500 257.500h13"/>
              <path class="bright" d="M7.500 23v10.500h4M15.500 44v10.500h5M24.500 64v30.500h14"/>
            </svg>
            <div class="row"><svg class="fold"><use href="#i-fold"/></svg><span class="item"><svg class="icon"><use href="#i-node"/></svg>Node</span></div>
            <div class="row lv1"><svg class="fold"><use href="#i-fold"/></svg><span class="item muted"><svg class="icon grey"><use href="#i-brush"/></svg>CanvasItem</span></div>
            <div class="row lv2"><svg class="fold"><use href="#i-fold"/></svg><span class="item"><svg class="icon blue"><use href="#i-node"/></svg>Node2D</span></div>
            <div class="row lv3"><span class="fold"></span><span class="item"><svg class="icon blue"><use href="#i-anim"/></svg>AnimatedSprite2D</span></div>
            <div class="row lv3"><span class="fold"></span><span class="item selected"><svg class="icon blue"><use href="#i-sprite"/></svg>Sprite2D</span></div>
            <div class="row lv2"><svg class="fold"><use href="#i-fold"/></svg><span class="item"><svg class="icon green"><use href="#i-node"/></svg>Control</span></div>
            <div class="row lv3"><svg class="fold"><use href="#i-fold"/></svg><span class="item"><svg class="icon green"><use href="#i-container"/></svg>Container</span></div>
            <div class="row lv4"><span class="fold"></span><span class="item"><svg class="icon green"><use href="#i-aspect"/></svg>AspectRatioContainer</span></div>
            <div class="row lv1"><svg class="fold"><use href="#i-fold"/></svg><span class="item"><svg class="icon red"><use href="#i-node"/></svg>Node3D</span></div>
            <div class="row lv2"><svg class="fold"><use href="#i-fold"/></svg><span class="item muted"><svg class="icon darkred"><use href="#i-visual"/></svg>VisualInstance3D</span></div>
            <div class="row lv3"><svg class="fold"><use href="#i-fold"/></svg><span class="item muted"><svg class="icon darkred"><use href="#i-geometry"/></svg>GeometryInstance3D</span></div>
            <div class="row lv4"><svg class="fold"><use href="#i-fold"/></svg><span class="item muted"><svg class="icon grey"><use href="#i-node"/></svg>SpriteBase3D</span></div>
            <div class="row lv5"><span class="fold"></span><span class="item"><svg class="icon red"><use href="#i-anim"/></svg>AnimatedSprite3D</span></div>
            <div class="row lv5"><span class="fold"></span><span class="item"><svg class="icon red"><use href="#i-sprite"/></svg>Sprite3D</span></div>
          </div>
          <h4>Description:</h4>
          <div class="description">
            <p class="class-name">Class: <a href="#">Sprite2D</a></p>
            <p>General-purpose sprite node.</p>
          </div>
        </div>
      </div>
      <div class="dialog-buttons">
        <div class="marked">
          <button>Create</button>
          <svg class="marker" viewBox="0 0 118 62" aria-hidden="true">
            <path fill="none" stroke="#ff7f82" stroke-width="4" stroke-linecap="round" d="M16 4C34 3 84 3 100 4c10 1 14 6 14 14 1 12 0 20 1 30 0 7-5 11-13 11-20-1-68-1-88 1C6 59 3 53 4 44 3 34 5 24 3 16 3 8 8 2 17 3"/>
            <path fill="none" stroke="#ff7f82" stroke-width="3" stroke-linecap="round" d="M4 14C6 6 12 4 24 4c22-2 54-2 76-2 9 1 13 4 13 12 2 10 1 20 2 30 0 9-5 13-14 14-24 1-58-1-84 0C7 58 3 52 3 44"/>
          </svg>
        </div>
        <button>Cancel</button>
      </div>
    </div>
  </div>

  <script>
    const step = 73;
    const svgNS = "http://www.w3.org/2000/svg";

    function addLabel(parent, text, x, y, rotate) {
      const label = document.createElementNS(svgNS, "text");
      label.textContent = text;
      if (rotate) {
        label.setAttribute("transform", `translate(${x} ${y}) rotate(-90)`);
      } else {
        label.setAttribute("x", x);
        label.setAttribute("y", y);
      }
      parent.appendChild(label);
    }

    const labelsH = document.getElementById("labels-h");
    for (let i = -1; i <= 11; i++) {
      addLabel(labelsH, i * 100, 109 + i * step + 2, 7, false);
    }

    const labelsV = document.getElementById("labels-v");
    for (let i = 0; i <= 7; i++) {
      addLabel(labelsV, i * 100, 7, 68 + i * step - 1, true);
    }
  </script>
</body>
</html>
```
FILE: styles.css
```
* {
  margin: 0;
  padding: 0;
  box-sizing: border-box;
}
body {
  background: #101010;
  color: #cdcfd2;
  font-family: "Noto Sans", sans-serif;
  font-size: 10px;
  line-height: 14px;
  padding: 20px;
  min-height: 100vh;
  display: flex;
}
button, input, select {
  font: inherit;
  color: inherit;
  background: none;
  border: none;
  outline: none;
  appearance: none;
  min-width: 0;
}
button {
  display: flex;
  align-items: center;
  justify-content: center;
  white-space: nowrap;
  cursor: pointer;
}
a {
  color: inherit;
}
.sprites {
  position: absolute;
  width: 0;
  height: 0;
}
.icon {
  width: 12px;
  height: 12px;
  flex: none;
  color: #e0e0e0;
}
.small {
  width: 10px;
  height: 10px;
}
.dim .icon {
  color: #75797f;
}
.icon.blue { color: #8da5f3; }
.icon.green { color: #8eef97; }
.icon.red { color: #fc7f7f; }
.icon.darkred { color: #b96265; }
.icon.grey { color: #999; }
.icon.folder { color: #8cbfee; }

.app {
  position: relative;
  flex: 1;
  display: flex;
  flex-direction: column;
  background: #1d2229;
  overflow: hidden;
}

/* title bar */
.titlebar {
  display: flex;
  align-items: center;
  height: 15px;
  padding-right: 2px;
  background: #2b2b2b;
  color: #8b8b8b;
  font-family: Roboto, sans-serif;
  font-size: 9px;
  gap: 4px;
}
.logo {
  width: 8px;
}
.window-buttons {
  display: flex;
  margin-left: auto;
}
.window-buttons button {
  width: 33px;
}
.window-buttons svg {
  width: 8px;
  height: 8px;
}

/* menu bar */
.menubar {
  display: flex;
  justify-content: space-between;
  align-items: center;
  height: 35px;
  padding: 0 8px 0 6px;
}
.menus {
  display: flex;
  gap: 12px;
  padding-bottom: 5px;
}
.workspaces {
  display: flex;
  gap: 12px;
  padding-left: 6px;
  font-size: 12px;
  font-weight: 600;
}
.workspaces button {
  gap: 2px;
}
.workspaces .active,
.workspaces .active .icon {
  color: #6bb3f0;
}
.run {
  display: flex;
  gap: 7px;
}
.run-buttons {
  display: grid;
  grid-auto-flow: column;
  grid-auto-columns: 23px 24px;
  background: #252b34;
  border-radius: 2px;
  height: 23px;
}
.reel .icon {
  color: #b9bbbe;
}
.renderer {
  display: flex;
  align-items: center;
  gap: 4px;
  font-weight: 700;
  color: #4f88ac;
}
.renderer .icon {
  color: #4f88ac;
}

/* docks */
.workarea {
  flex: 1;
  display: flex;
  gap: 3px;
  padding: 0 6px 5px 2px;
}
.dock-column {
  width: 196px;
  display: flex;
  flex-direction: column;
  gap: 3px;
}
.dock {
  display: flex;
  flex-direction: column;
  background: #363d4a;
  border-radius: 2px;
}
.files-dock {
  flex: 1;
}
.inspector {
  width: 196px;
}
.tabs {
  display: flex;
  flex: none;
  height: 21px;
  background: #252b34;
}
.tab {
  padding: 0 8px 3px;
  border-top: 2px solid transparent;
  color: #7b7f85;
}
.tab.active {
  background: #363d4a;
  border-color: #4b7fac;
  color: #d0d2d5;
}
.scene-tab {
  gap: 3px;
}
.scene-tab .x {
  width: 10px;
  margin-left: 7px;
}
.tab-menu {
  width: 12px;
  margin-left: auto;
}
.tab-menu .icon {
  color: #8b8f94;
}
.tab-menu.wide {
  width: 21px;
}
.tab-menu.wide .icon {
  color: #e0e0e0;
}
.new-tab {
  width: 27px;
}
.new-tab .icon {
  color: #85898f;
}
.toolbar {
  display: flex;
  align-items: center;
  gap: 2px;
  height: 28px;
  padding: 0 2px;
}
.inspector .toolbar {
  height: 26px;
  padding-top: 1px;
}
.toolbar button {
  width: 21px;
  height: 21px;
}
.toolbar .nav {
  width: 16px;
}
.spacer {
  flex: 1;
}
.field {
  flex: 1;
  display: flex;
  align-items: center;
  min-width: 0;
  height: 21px;
  padding: 0 5px 0 4px;
  background: #252b34;
  border-radius: 2px;
}
.field input,
.field select {
  flex: 1;
  width: 0;
}
.field input::placeholder {
  color: #a3a6aa;
}
.file-bars,
.inspector-bars {
  display: flex;
  flex-direction: column;
  gap: 3px;
  padding: 3px;
}
.inspector-bars {
  padding-top: 0;
}
.file-bar {
  display: flex;
  align-items: center;
}
.file-bar .nav {
  width: 14px;
}
.file-bar .path {
  margin-left: 1px;
}
.side {
  width: 20px;
}
.inspector .side {
  width: 23px;
  padding-left: 3px;
}
.split {
  width: 12px;
  height: 12px;
  background: #dfe0e1;
}
.object select {
  padding-left: 4px;
}

/* trees */
.tree {
  position: relative;
  flex: 1;
  display: grid;
  grid-auto-rows: 20px 20px 21px 20px 21px;
  align-content: start;
  margin: 0 3px 3px;
  padding: 3px;
  background: #21262e;
  border-radius: 2px;
}
.scene-dock .tree {
  height: 311px;
  flex: none;
  padding: 1px 0 1px 1px;
}
.tree.focused {
  border: 2px solid #62a6e0;
}
.row {
  position: relative;
  display: flex;
  align-items: center;
}
.lv1 { padding-left: 9px; }
.lv2 { padding-left: 18px; }
.lv3 { padding-left: 27px; }
.lv4 { padding-left: 36px; }
.lv5 { padding-left: 45px; }
.fold {
  width: 8px;
  height: 8px;
  color: #85888d;
}
.item {
  flex: 1;
  align-self: stretch;
  display: flex;
  align-items: center;
  gap: 4px;
  padding-left: 3px;
}
.item.selected {
  background: #385068;
  color: #e3e5e7;
}
.item.outlined {
  border: 1px solid #6c7c8c;
  border-radius: 2px;
  padding-left: 2px;
}
.item.muted {
  color: #666a70;
}
.row-button {
  width: 18px;
}
.thumb {
  background: #363d52;
  border-radius: 2px;
  padding: 2px;
}
.guides {
  position: absolute;
  width: 100%;
  height: 100%;
}
.guides path {
  fill: none;
  stroke: #30353d;
}
.guides .mid {
  stroke: #4d5157;
}
.guides .bright {
  stroke: #b4b6b9;
}

/* 2D editor */
.center {
  flex: 1;
  min-width: 0;
  display: flex;
  flex-direction: column;
}
.canvas-tools {
  display: flex;
  align-items: center;
  height: 28px;
  padding-left: 3px;
  background: #363d4a;
}
.pressed {
  width: 21px;
  height: 21px;
  margin-right: 3px;
  background: #20272f;
  border-radius: 2px;
}
.pressed .icon {
  color: #70bafa;
}
.tool-group {
  display: grid;
  grid-auto-flow: column;
  grid-auto-columns: 23px 24px;
  height: 22px;
  padding: 0 3px 0 2px;
  border-left: 1px solid #464c58;
}
.camera .icon {
  color: #5b6996;
}
.tool-group.view {
  display: flex;
  padding: 0 8px;
  border-right: 1px solid #464c58;
}
.viewport {
  flex: 1;
  display: grid;
  grid-template: 11px 1fr / 11px 1fr;
  background: #1d2229;
}
.ruler-corner {
  background: #7c7f84;
}
.ruler-h {
  width: 100%;
  height: 11px;
}
.ruler-v {
  width: 11px;
  height: 100%;
}
.viewport text {
  font-size: 6px;
  fill: #9a9da2;
}
.canvas {
  position: relative;
  overflow: hidden;
  background: #4d4d4d;
}
.axis,
.screen-rect,
.origin,
.scroll {
  position: absolute;
}
.axis-x {
  left: 0;
  right: 0;
  top: 68px;
  height: 1px;
  background: #a13e4c;
}
.axis-y {
  left: 109px;
  top: 0;
  bottom: 0;
  width: 1px;
  background: #6b9a1e;
}
.screen-rect {
  left: 109px;
  top: 68px;
  width: 841px;
  height: 473px;
  border: 1px solid #54547a;
  border-top-color: #7c4a80;
  border-left-color: #75917c;
}
.origin {
  left: 103px;
  top: 62px;
  width: 13px;
  height: 13px;
}
.zoom {
  display: flex;
  align-items: center;
  height: 28px;
  padding-left: 2px;
}
.zoom button {
  width: 23px;
}
.zoom .percent {
  width: 39px;
}
.scroll {
  background: #595959;
  border-radius: 2px;
}
.scroll span {
  position: absolute;
  background: #929292;
  border-radius: 2px;
}
.scroll-v {
  top: 2px;
  bottom: 12px;
  right: 4px;
  width: 2px;
}
.scroll-v span {
  top: 31%;
  bottom: 30%;
  left: -1px;
  width: 4px;
}
.scroll-h {
  left: 2px;
  right: 12px;
  bottom: 4px;
  height: 2px;
}
.scroll-h span {
  left: 30%;
  right: 34%;
  top: -1px;
  height: 4px;
}
.bottom-panel {
  display: flex;
  align-items: center;
  gap: 13px;
  height: 30px;
  margin-top: 2px;
  padding: 0 7px;
  background: #363d4a;
  border-radius: 2px;
}
.output::before {
  content: "";
  width: 6px;
  height: 6px;
  margin-right: 3px;
  border-radius: 50%;
  background: #ff786b;
}
.version {
  display: flex;
  align-items: center;
  gap: 6px;
  margin-left: auto;
  color: #94989e;
}
.version a {
  text-decoration: none;
}
.version .icon {
  color: #5a5f69;
}

/* inspector */
.properties {
  flex: 1;
  margin: 0 3px 3px;
  padding: 3px 2px;
  background: #21262e;
  border-radius: 2px;
}
.class-header {
  display: flex;
  align-items: center;
  justify-content: center;
  gap: 4px;
  height: 17px;
  font-size: 10px;
  background: #41454e;
  border-radius: 1px;
}
.props {
  display: flex;
  flex-direction: column;
  gap: 3px;
  padding-top: 1px;
}
.prop {
  display: grid;
  grid-template-columns: 1fr 1fr;
  gap: 3px 0;
}
.prop > label {
  padding: 3px 6px;
  color: #94979b;
}
.value {
  position: relative;
  display: flex;
  align-items: center;
  height: 21px;
  padding-right: 3px;
  background: #1e2329;
  border-radius: 2px;
}
.value select {
  flex: 1;
  padding-left: 4px;
}
.value input[type="text"] {
  width: 0;
  flex: 1;
  padding-left: 4px;
}
.value .small {
  color: #c9cbcd;
}
.second {
  grid-column: 2;
}
.component {
  width: 14px;
  line-height: 21px;
  text-align: center;
  background: #16191f;
}
.cx { color: #8b5a4c; }
.cy { color: #4f8a60; }
.on {
  gap: 6px;
  padding-left: 4px;
  color: #62a6dd;
}
.on input {
  width: 10px;
  height: 10px;
  border-radius: 2px;
  background: #70bafa;
}
.tick {
  position: absolute;
  left: 4px;
  width: 10px;
  height: 10px;
  pointer-events: none;
}
.tick path {
  fill: none;
  stroke: #fff;
  stroke-width: 2;
}
.groups {
  display: grid;
  grid-auto-rows: 17px 18px;
  background: #282d36;
}
.groups .class-header {
  height: auto;
}
.groups button {
  justify-content: flex-start;
  gap: 3px;
  padding-left: 3px;
  font-weight: 700;
}
.groups button::before {
  content: "";
  width: 4px;
  height: 4px;
  margin-right: 1px;
  border: solid #999ca0;
  border-width: 1px 1px 0 0;
  transform: rotate(45deg);
}
.value.script {
  background: none;
  padding-right: 0;
}
.script select {
  padding-left: 15px;
}
.drop {
  width: 20px;
  height: 21px;
  display: flex;
  align-items: center;
  justify-content: center;
  background: #252b34;
}
.metadata {
  width: 131px;
  height: 22px;
  margin: 4px auto 0;
  padding: 0 4px;
  background: #2b3038;
  border-radius: 2px;
}
.metadata span {
  flex: 1;
}

/* create node dialog */
.dialog {
  position: absolute;
  top: 115px;
  left: 368px;
  right: 372px;
  background: #363d4a;
  box-shadow: 0 2px 10px 2px rgba(0, 0, 0, 0.35);
}
.dialog-title {
  display: flex;
  align-items: center;
  gap: 4px;
  height: 22px;
  padding: 0 1px 2px 5px;
  background: #262b40;
  color: #e8e8ec;
  font-family: Roboto, sans-serif;
  font-size: 9px;
}
.dialog-body {
  display: flex;
  gap: 3px;
  padding: 6px 7px 0 6px;
}
.dialog h4 {
  font-size: 10px;
  line-height: 18px;
  height: 22px;
  padding-left: 3px;
}
.dialog .tree {
  margin: 0;
}
.dialog-side {
  width: 110px;
  display: flex;
  flex-direction: column;
}
.favorites,
.recent {
  height: 210px;
  background: #21262e;
  border-radius: 2px;
}
.favorites {
  margin-bottom: 3px;
}
.recent {
  background: #252b34;
  padding: 2px 5px;
}
.recent .row {
  height: 20px;
  gap: 4px;
}
.dialog-main {
  flex: 1;
}
.search-row {
  display: flex;
  margin-bottom: 3px;
}
.search-row button {
  width: 23px;
  padding-left: 3px;
}
.field.focused {
  padding: 0 2px;
  border: 2px solid #62a6e0;
}
.dialog .matches {
  height: 308px;
  margin-bottom: 3px;
}
.description {
  height: 66px;
  background: #21262e;
  border-radius: 2px;
}
.description p {
  padding: 2px 3px;
}
.description .class-name {
  background: #2a2e36;
  color: #6bb3f0;
  font-weight: 700;
  height: 19px;
}
.class-name a {
  color: #cdcfd2;
}
.dialog-buttons {
  display: flex;
  justify-content: space-evenly;
  padding: 6px 7px 8px 6px;
}
.dialog-buttons button {
  width: 77px;
  height: 24px;
  background: #252b34;
  border-radius: 2px;
}
.marked {
  position: relative;
}
.marker {
  position: absolute;
  top: -21px;
  left: -21px;
  width: 118px;
  height: 62px;
}
```
